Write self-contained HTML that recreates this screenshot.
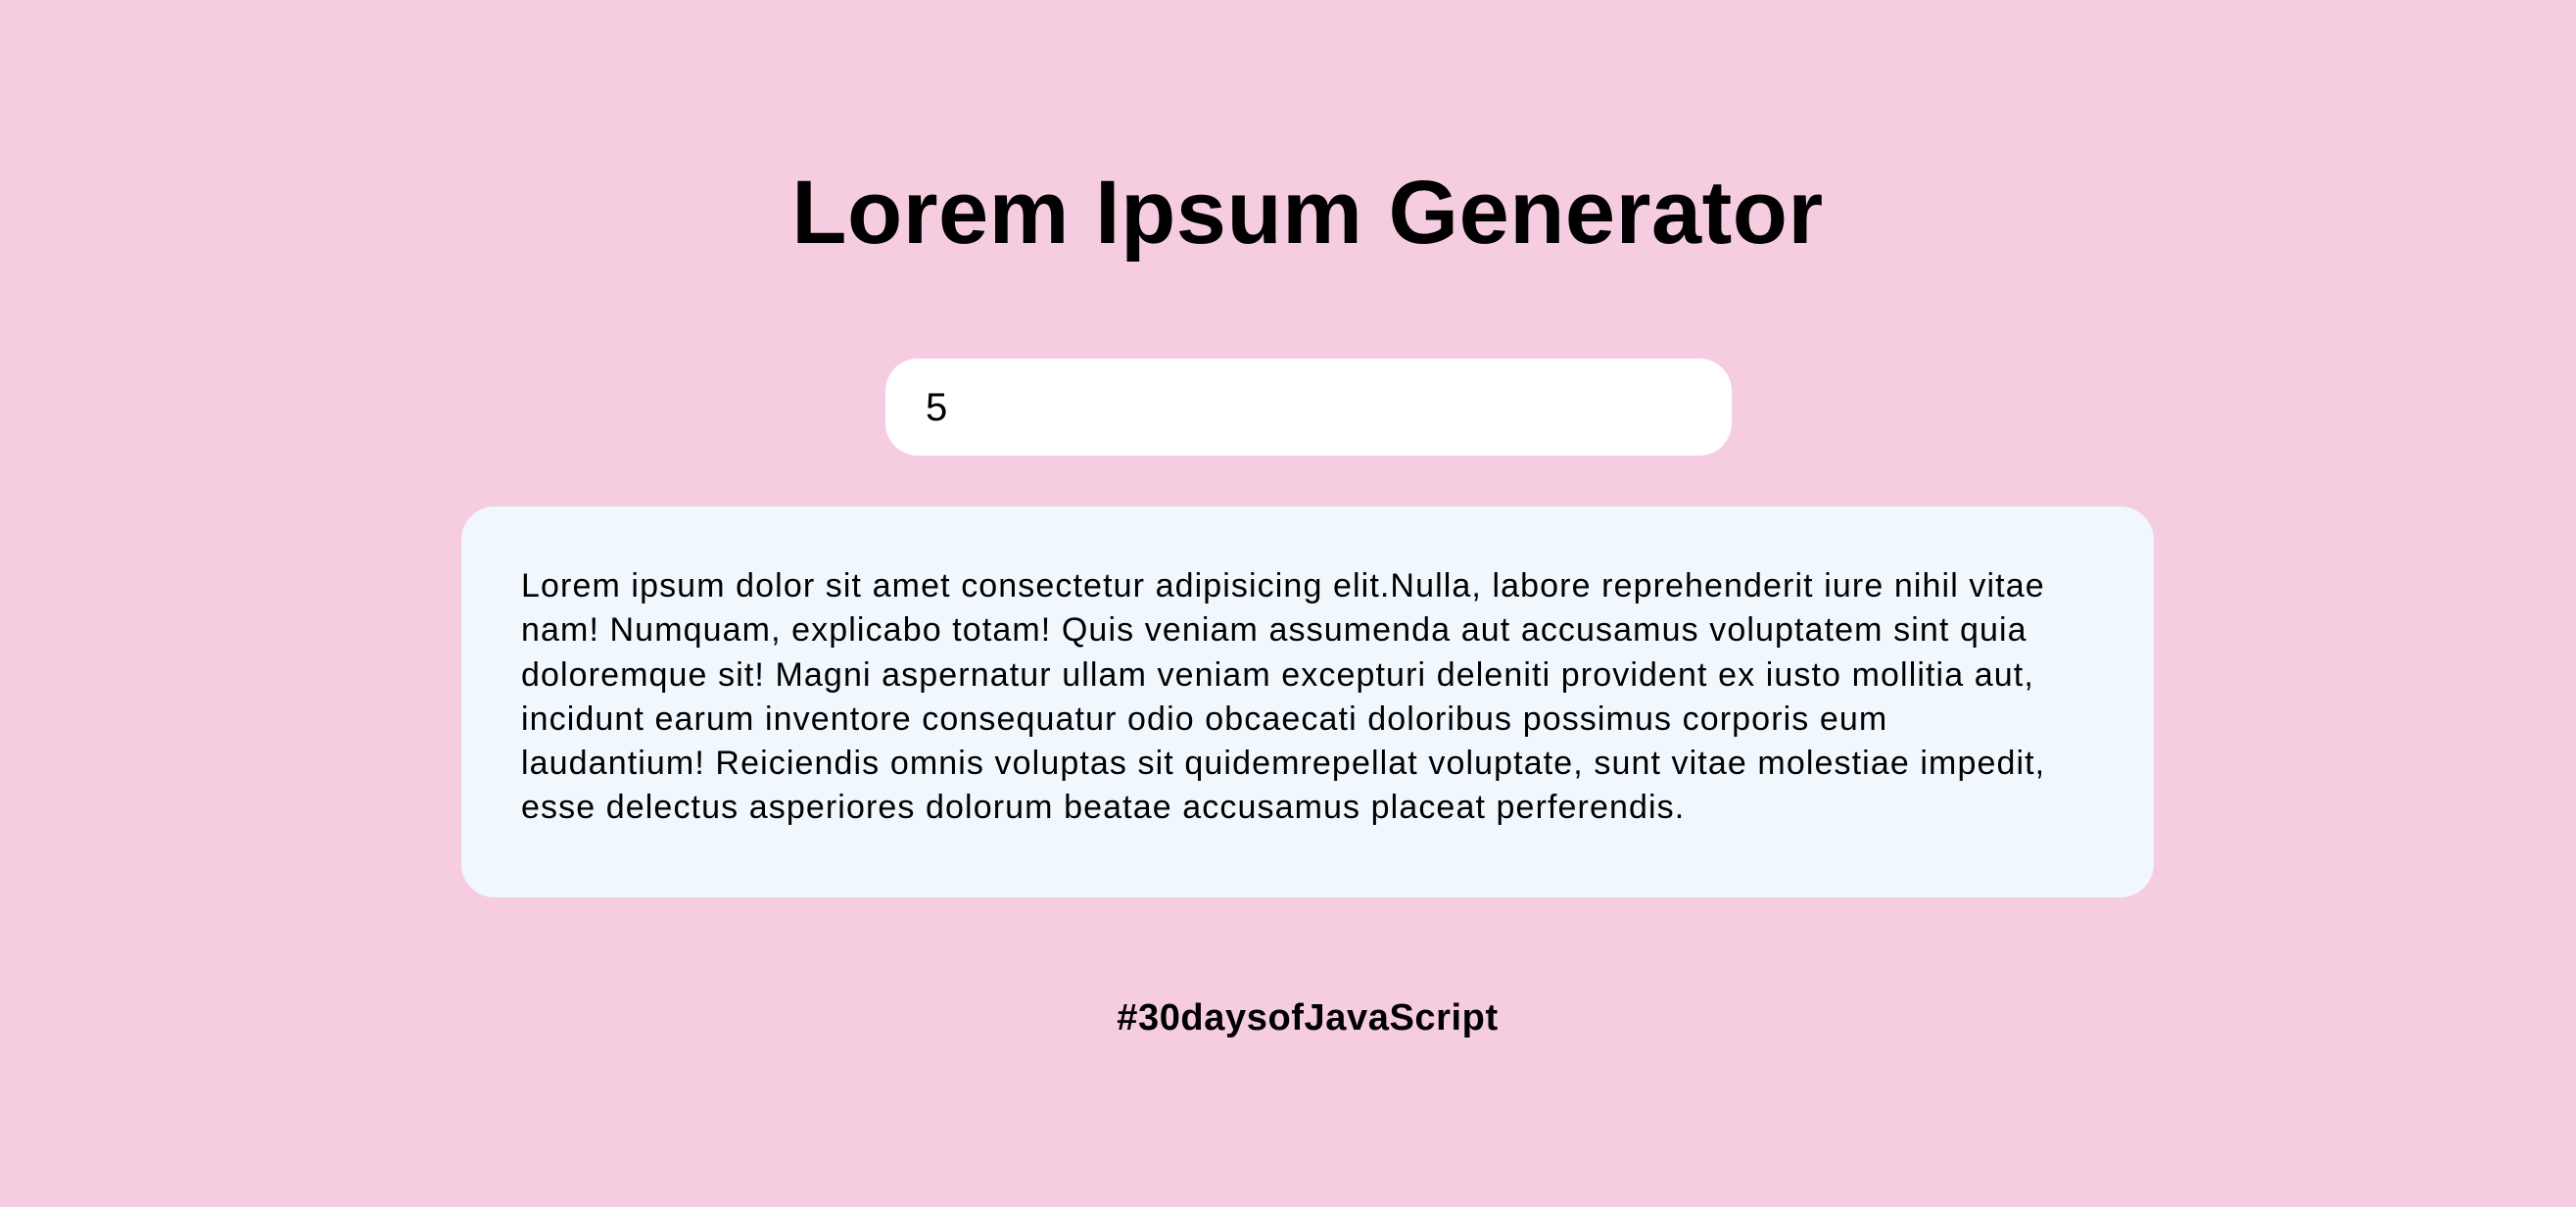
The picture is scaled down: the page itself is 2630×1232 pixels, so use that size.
<!DOCTYPE html>
<html><head><meta charset="utf-8"><style>
html,body{margin:0;padding:0}
body{width:2630px;height:1232px;background:#f6cde0;font-family:"Liberation Sans",sans-serif;color:#000;position:relative;overflow:hidden}
h1{position:absolute;left:20px;width:2630px;top:162px;margin:0;text-align:center;font-size:92px;font-weight:bold;line-height:110px;letter-spacing:0.5px}
.inp{position:absolute;left:904px;top:366px;width:864px;height:99px;background:#fff;border-radius:33px}
.inp span{position:absolute;left:41px;top:28px;font-size:40px;line-height:44px}
.box{position:absolute;left:471px;top:517px;width:1728px;height:399px;background:#f0f7fd;border-radius:34px}
.txt{position:absolute;left:61px;top:59px;font-size:34px;line-height:45.3px;white-space:nowrap;letter-spacing:1.1px}
.foot{position:absolute;left:20px;width:2630px;top:1017px;text-align:center;font-size:38px;font-weight:bold;line-height:44px;letter-spacing:0.6px}
</style></head><body>
<h1>Lorem Ipsum Generator</h1>
<div class="inp"><span>5</span></div>
<div class="box"><div class="txt">
Lorem ipsum dolor sit amet consectetur adipisicing elit.Nulla, labore reprehenderit iure nihil vitae<br>
nam! Numquam, explicabo totam! Quis veniam assumenda aut accusamus voluptatem sint quia<br>
doloremque sit! Magni aspernatur ullam veniam excepturi deleniti provident ex iusto mollitia aut,<br>
incidunt earum inventore consequatur odio obcaecati doloribus possimus corporis eum<br>
laudantium! Reiciendis omnis voluptas sit quidemrepellat voluptate, sunt vitae molestiae impedit,<br>
esse delectus asperiores dolorum beatae accusamus placeat perferendis.
</div></div>
<div class="foot">#30daysofJavaScript</div>
</body></html>
